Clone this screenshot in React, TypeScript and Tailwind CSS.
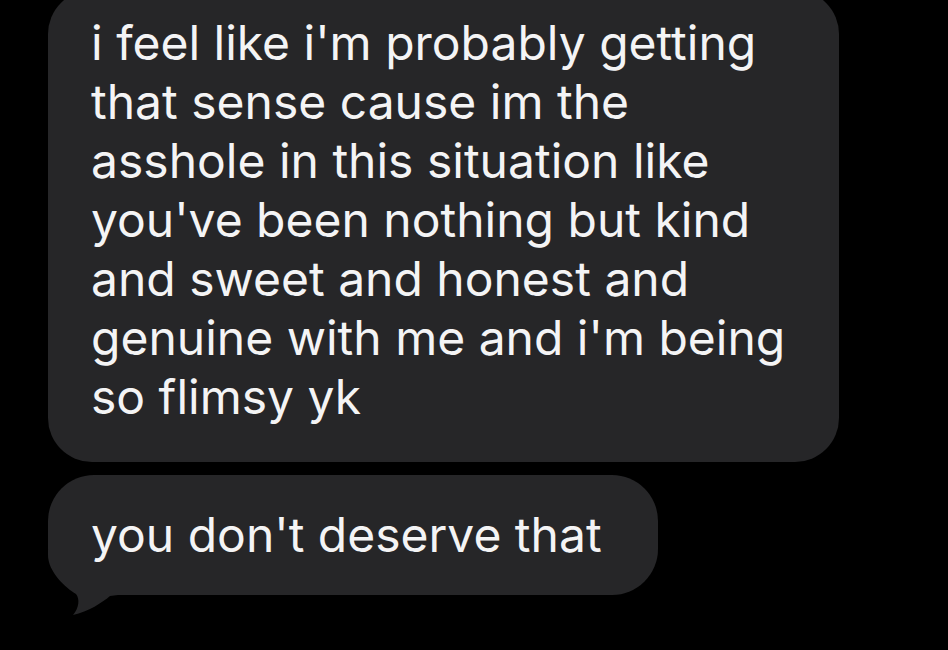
import React from "react";

const lines = [
  "i feel like i'm probably getting",
  "that sense cause im the",
  "asshole in this situation like",
  "you've been nothing but kind",
  "and sweet and honest and",
  "genuine with me and i'm being",
  "so flimsy yk",
];

const App = () => {
  return (
    <div className="h-[650px] w-full overflow-hidden bg-black pl-[48px] flex flex-col items-start font-['Inter',sans-serif] text-[48px] leading-[59px] text-[#f4f4f5]">
      <div className="-mt-[10px] w-[791px] rounded-[44px] bg-[#262628] pl-[43px] pt-[23px] pb-[36px]">
        {lines.map((l, i) => (
          <div key={i} className="whitespace-nowrap">
            {l}
          </div>
        ))}
      </div>
      {/* last bubble with tail */}
      <div className="relative mt-[13px] h-[120px] w-[610px] rounded-[46px] bg-[#262628] pl-[43px] pt-[30px]">
        <svg className="absolute left-0 top-[75px]" width="70" height="70" viewBox="0 0 70 70">
          <path
            d="M0 0 L70 0 L70 45 L62 46 C55 52 40 62 25 65 C31 58 32 49 28 44 C18 38 0 22 0 5 Z"
            fill="#262628"
          />
        </svg>
        <span className="relative whitespace-nowrap">you don't deserve that</span>
      </div>
    </div>
  );
};

export default App;
